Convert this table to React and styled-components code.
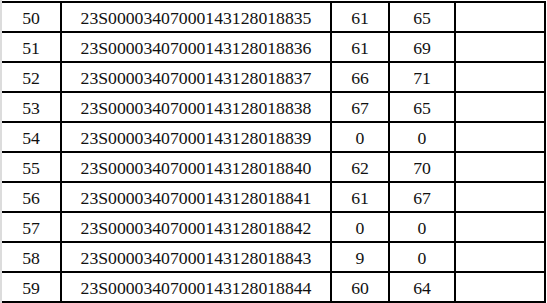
import React from "react";
import styled, { createGlobalStyle } from "styled-components";

const GlobalStyle = createGlobalStyle`
    html, body {
        margin: 0;
        padding: 0;
        background: #ffffff;
    }
`;

const Sheet = styled.div`
    width: 547px;
    height: 303px;
    box-sizing: border-box;
    padding-top: 1px;
    border-left: 2px solid #dcdcdc;
    background: #ffffff;
    overflow: hidden;
`;

const Table = styled.div`
    display: flex;
    flex-direction: column;
    width: 544px;
    border-top: 2px solid #000;
`;

const Row = styled.div`
    display: grid;
    grid-template-columns: 60px 270px 58px 66px 90px;
    height: 30px;
    box-sizing: border-box;
    border-bottom: 2px solid #000;
`;

const Cell = styled.div`
    box-sizing: border-box;
    border-right: 2px solid #000;
    padding-top: 3px;
    text-align: center;
    font-family: "Liberation Serif", "Times New Roman", serif;
    font-size: 17.7px;
    line-height: 25px;
    color: #111;
    white-space: nowrap;
`;

const rows = [
    [50, "23S00003407000143128018835", 61, 65],
    [51, "23S00003407000143128018836", 61, 69],
    [52, "23S00003407000143128018837", 66, 71],
    [53, "23S00003407000143128018838", 67, 65],
    [54, "23S00003407000143128018839", 0, 0],
    [55, "23S00003407000143128018840", 62, 70],
    [56, "23S00003407000143128018841", 61, 67],
    [57, "23S00003407000143128018842", 0, 0],
    [58, "23S00003407000143128018843", 9, 0],
    [59, "23S00003407000143128018844", 60, 64],
];

const App = () => {
    return (
        <>
            <GlobalStyle />
            <Sheet>
                <Table>
                    {rows.map(([no, code, a, b]) => (
                        <Row key={no}>
                            <Cell>{no}</Cell>
                            <Cell>{code}</Cell>
                            <Cell>{a}</Cell>
                            <Cell>{b}</Cell>
                            <Cell />
                        </Row>
                    ))}
                </Table>
            </Sheet>
        </>
    );
};

export default App;
